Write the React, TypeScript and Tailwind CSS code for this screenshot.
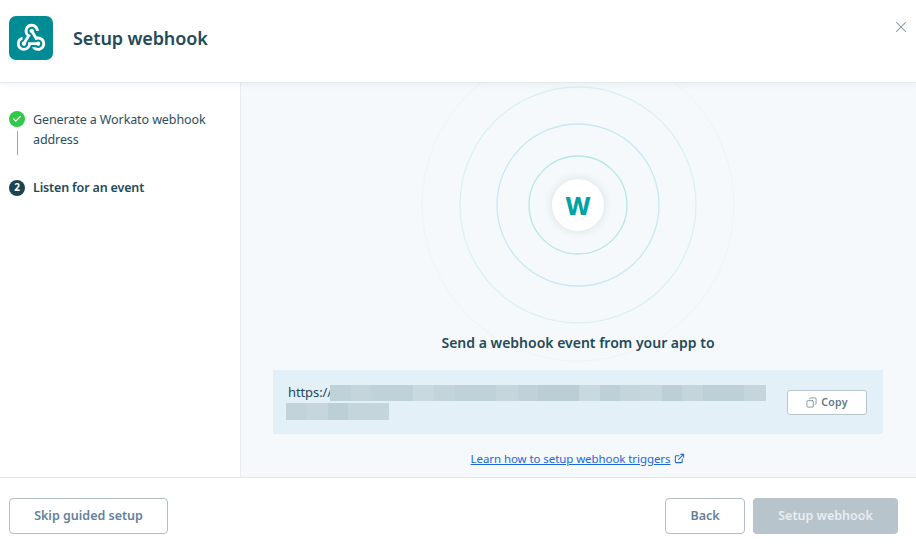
import { Check, Copy, ExternalLink, X } from 'lucide-react';
import { MdWebhook } from 'react-icons/md';

const font = { fontFamily: '"Noto Sans", sans-serif' };

const lineOne = [
  { w: 21, c: 'bg-[#bfd1d9]' },
  { w: 20, c: 'bg-[#c4d5dc]' },
  { w: 42, c: 'bg-[#bfd2da]' },
  { w: 21, c: 'bg-[#c9d9e0]' },
  { w: 21, c: 'bg-[#c3d4db]' },
  { w: 41, c: 'bg-[#bfd1d9]' },
  { w: 22, c: 'bg-[#c6d6dd]' },
  { w: 20, c: 'bg-[#c0d1d9]' },
  { w: 41, c: 'bg-[#bbcdd5]' },
  { w: 21, c: 'bg-[#c9d9e0]' },
  { w: 20, c: 'bg-[#bdcfd7]' },
  { w: 20, c: 'bg-[#c4d5dc]' },
  { w: 22, c: 'bg-[#c7d7de]' },
  { w: 20, c: 'bg-[#bccfd7]' },
  { w: 21, c: 'bg-[#c4d5dc]' },
  { w: 41, c: 'bg-[#bdcfd7]' },
  { w: 22, c: 'bg-[#c4d5dc]' },
];

const lineTwo = [
  { w: 20, c: 'bg-[#c2d3da]' },
  { w: 22, c: 'bg-[#c6d6dd]' },
  { w: 20, c: 'bg-[#bccfd6]' },
  { w: 41, c: 'bg-[#c4d5dc]' },
];

function Rings() {
  return (
    <svg width="320" height="320" viewBox="0 0 320 320" fill="none" className="absolute left-[177px] top-[-38px]">
      <circle cx="160" cy="160" r="156" stroke="#eef5f7" strokeWidth="1" />
      <circle cx="160" cy="160" r="118" stroke="#dcf0f3" strokeWidth="1.3" />
      <circle cx="160" cy="160" r="81" stroke="#c9e8f3" strokeWidth="1.3" />
      <circle cx="160" cy="160" r="49" stroke="#b6e6e6" strokeWidth="1.3" />
    </svg>
  );
}

export default function App() {
  return (
    <div className="flex h-[547px] w-[916px] flex-col overflow-hidden bg-white text-[#234a58]" style={font}>
      {/* Header */}
      <div className="relative z-10 flex h-[83px] shrink-0 items-center border-b border-[#e3eaed] bg-white pb-[6px] pl-[9px] shadow-[0_2px_6px_rgba(30,67,80,0.06)]">
        <div className="flex h-[44px] w-[44px] items-center justify-center rounded-[7px] bg-[#008b95]">
          <MdWebhook className="h-[34px] w-[34px] text-white" />
        </div>
        <h1 className="ml-5 text-[18px] font-semibold tracking-[-0.12px]">Setup webhook</h1>
        <button className="absolute right-[6px] top-[18px] text-[#7b929d]">
          <X className="h-[18px] w-[18px]" strokeWidth={1.4} />
        </button>
      </div>

      <div className="flex min-h-0 flex-1">
        {/* Steps */}
        <div className="w-[241px] shrink-0 border-r border-[#e6ecef] pl-[9px] pt-[27px] text-[12.5px] tracking-[-0.1px]">
          <div className="flex gap-2">
            <div className="mt-[1px] flex flex-col items-center">
              <div className="flex h-4 w-4 items-center justify-center rounded-full bg-[#31c948]">
                <Check className="h-[10px] w-[10px] text-white" strokeWidth={3} />
              </div>
              <div className="mt-[4px] h-[24px] w-px bg-[#93a5ae]" />
            </div>
            <p className="w-[185px] leading-[20px] text-[#2c4f60]">Generate a Workato webhook address</p>
          </div>
          <div className="mt-[22px] flex items-center gap-2">
            <div className="flex h-4 w-4 items-center justify-center rounded-full bg-[#1e4350] text-[10px] font-bold text-white">2</div>
            <p className="pt-px font-semibold leading-[20px] tracking-[-0.15px]">Listen for an event</p>
          </div>
        </div>

        {/* Main */}
        <div className="flex min-w-0 flex-1 flex-col items-center bg-[#f5f9fb] pr-px">
          <div className="relative h-[250px] w-full shrink-0">
            <Rings />
            <div className="absolute left-[311px] top-[96px] flex h-[52px] w-[52px] items-center justify-center rounded-full bg-white text-[25px] font-extrabold leading-none text-[#00a3a3] shadow-[0_0_10px_rgba(30,67,80,0.14)]">
              W
            </div>
          </div>
          <h2 className="relative text-[14px] font-semibold leading-[20px]">Send a webhook event from your app to</h2>
          <div className="mt-[17px] flex h-[64px] w-[610px] shrink-0 items-center justify-between bg-[#e4f0f7] pl-[13px] pr-4">
            <div className="w-[480px] text-[13px] tracking-[-0.1px]">
              <div className="flex h-[17px] items-center">
                <span className="w-[44px] pl-[2px]">https://</span>
                <div className="flex h-4">
                  {lineOne.map((s, i) => (
                    <div key={i} className={s.c} style={{ width: s.w }} />
                  ))}
                </div>
              </div>
              <div className="mt-[1px] flex h-[17px]">
                {lineTwo.map((s, i) => (
                  <div key={i} className={s.c} style={{ width: s.w }} />
                ))}
              </div>
            </div>
            <button className="flex h-[25px] w-[80px] items-center justify-center gap-[4px] rounded-[3px] border border-[#b7c5cd] bg-white pt-px text-[10.5px] font-semibold tracking-[0.3px] text-[#5f7885]">
              <Copy className="h-[11px] w-[11px] -scale-x-100" strokeWidth={1.6} />
              Copy
            </button>
          </div>
          <div className="mt-[16px] flex items-center gap-[4px] text-[11.5px] tracking-[-0.08px] text-[#1f66d9]">
            <a className="underline">Learn how to setup webhook triggers</a>
            <ExternalLink className="h-[11px] w-[11px]" strokeWidth={2.2} />
          </div>
        </div>
      </div>

      {/* Footer */}
      <div className="flex h-[70px] shrink-0 items-start justify-between border-t border-[#e3e7ea] pl-[9px] pr-[18px] pt-[20px] text-[12.5px] font-semibold">
        <button className="h-[36px] w-[159px] rounded-[4px] border border-[#b0bfc9] bg-white pt-px text-[#648299]">Skip guided setup</button>
        <div className="flex gap-2">
          <button className="h-[36px] w-[80px] rounded-[4px] border border-[#b0bfc9] bg-white pt-px text-[#648299]">Back</button>
          <button className="h-[36px] w-[145px] rounded-[4px] bg-[#b8c4cb] pt-px text-[#e8eef1]">Setup webhook</button>
        </div>
      </div>
    </div>
  );
}
